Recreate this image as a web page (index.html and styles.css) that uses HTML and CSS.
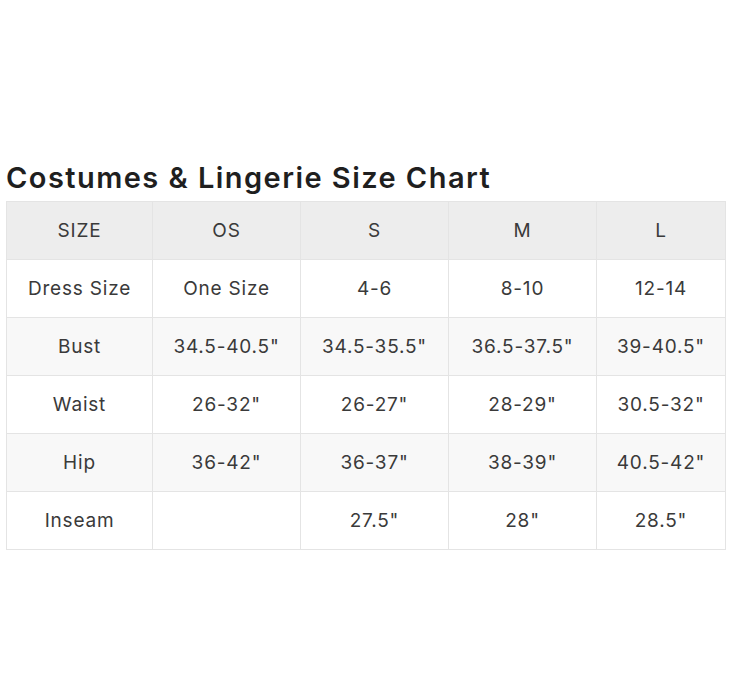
FILE: index.html
```html
<!DOCTYPE html>
<html>
<head>
<meta charset="utf-8">
<link rel="stylesheet" href="styles.css">
</head>
<body>
<div class="page">
  <h1 class="title">Costumes &amp; Lingerie Size Chart</h1>
  <table class="chart">
    <colgroup>
      <col class="c1"><col class="c2"><col class="c3"><col class="c4"><col class="c5">
    </colgroup>
    <thead>
      <tr><th>SIZE</th><th>OS</th><th>S</th><th>M</th><th>L</th></tr>
    </thead>
    <tbody>
      <tr><td>Dress Size</td><td>One Size</td><td>4-6</td><td>8-10</td><td>12-14</td></tr>
      <tr class="alt"><td>Bust</td><td>34.5-40.5"</td><td>34.5-35.5"</td><td>36.5-37.5"</td><td>39-40.5"</td></tr>
      <tr><td>Waist</td><td>26-32"</td><td>26-27"</td><td>28-29"</td><td>30.5-32"</td></tr>
      <tr class="alt"><td>Hip</td><td>36-42"</td><td>36-37"</td><td>38-39"</td><td>40.5-42"</td></tr>
      <tr><td>Inseam</td><td></td><td>27.5"</td><td>28"</td><td>28.5"</td></tr>
    </tbody>
  </table>
</div>
</body>
</html>
```
FILE: styles.css
```css
html, body {
  margin: 0;
  padding: 0;
  background: #ffffff;
}
.page {
  padding: 160px 0 0 6px;
  font-family: "Inter", "DejaVu Sans", sans-serif;
  color: #333333;
}
.title {
  margin: 0 0 5px 0;
  font-size: 29px;
  line-height: 36px;
  font-weight: 600;
  color: #1f1f1f;
  letter-spacing: 1.45px;
}
.chart {
  border-collapse: collapse;
  table-layout: fixed;
  width: 719px;
}
.c1 { width: 146px; }
.c2 { width: 148px; }
.c3 { width: 148px; }
.c4 { width: 148px; }
.c5 { width: 129px; }
.chart th, .chart td {
  border: 1px solid #e4e4e4;
  height: 57px;
  padding: 0;
  text-align: center;
  vertical-align: middle;
  font-size: 19px;
  font-weight: 400;
  color: #3a3a3a;
  letter-spacing: 0.8px;
}
.chart thead th {
  background: #ededed;
}
.chart tr.alt td {
  background: #f8f8f8;
}
```
